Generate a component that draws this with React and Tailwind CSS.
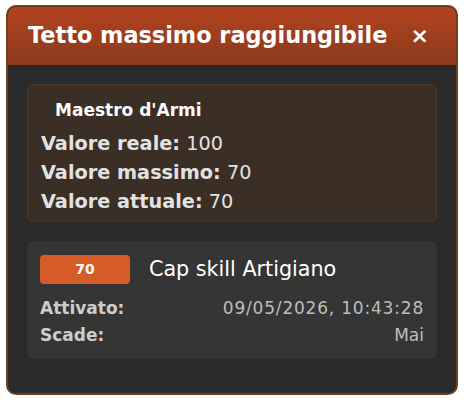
export default function App() {
  const rows = [
    { label: 'Valore reale:', value: '100' },
    { label: 'Valore massimo:', value: '70' },
    { label: 'Valore attuale:', value: '70' },
  ];

  return (
    <div className="min-h-screen bg-white pl-[6px] pt-[5px]" style={{ fontFamily: '"DejaVu Sans", Verdana, sans-serif' }}>
      <div className="w-[452px] h-[390px] rounded-[10px] border-2 border-[#6e3f1b] bg-[#2a2a2a] overflow-hidden flex flex-col">
        {/* Header */}
        <div className="h-[58px] shrink-0 flex items-center justify-between pl-[20px] pr-[27px] bg-gradient-to-b from-[#b3421f] to-[#8a3a1c]">
          <h1 className="text-[22.4px] font-bold text-white">Tetto massimo raggiungibile</h1>
          <span className="text-[22px] font-bold text-white leading-none">×</span>
        </div>

        {/* Body */}
        <div className="px-[19px] pt-[19px] flex flex-col gap-[19px]">
          <div className="rounded-[6px] border border-[#4c3826] bg-[#3a2e25] pl-[13px] pt-[12px] pb-[5px]">
            <p className="pl-[14px] text-[17px] font-bold text-white leading-[26px]">Maestro d'Armi</p>
            <div className="mt-[6px]">
              {rows.map((r) => (
                <p key={r.label} className="text-[19.3px] leading-[29px] text-[#e2e2e2]">
                  <span className="font-bold">{r.label}</span> {r.value}
                </p>
              ))}
            </div>
          </div>

          <div className="rounded-[6px] bg-[#353535] px-[13px] pt-[13px] pb-[10px]">
            <div className="flex items-center gap-[19px]">
              <span className="w-[90px] h-[29px] rounded-[4px] bg-[#d55b28] text-white text-[14px] font-bold flex items-center justify-center">
                70
              </span>
              <span className="text-[20.7px] text-white">Cap skill Artigiano</span>
            </div>
            <div className="mt-[10px] flex justify-between text-[17px] leading-[27px]">
              <span className="font-bold text-[#cdcdcd]">Attivato:</span>
              <span className="text-[#bdbdbd] tracking-[0.8px]">09/05/2026, 10:43:28</span>
            </div>
            <div className="flex justify-between text-[17px] leading-[27px]">
              <span className="font-bold text-[#cdcdcd]">Scade:</span>
              <span className="text-[#bdbdbd]">Mai</span>
            </div>
          </div>
        </div>
      </div>
    </div>
  );
}
